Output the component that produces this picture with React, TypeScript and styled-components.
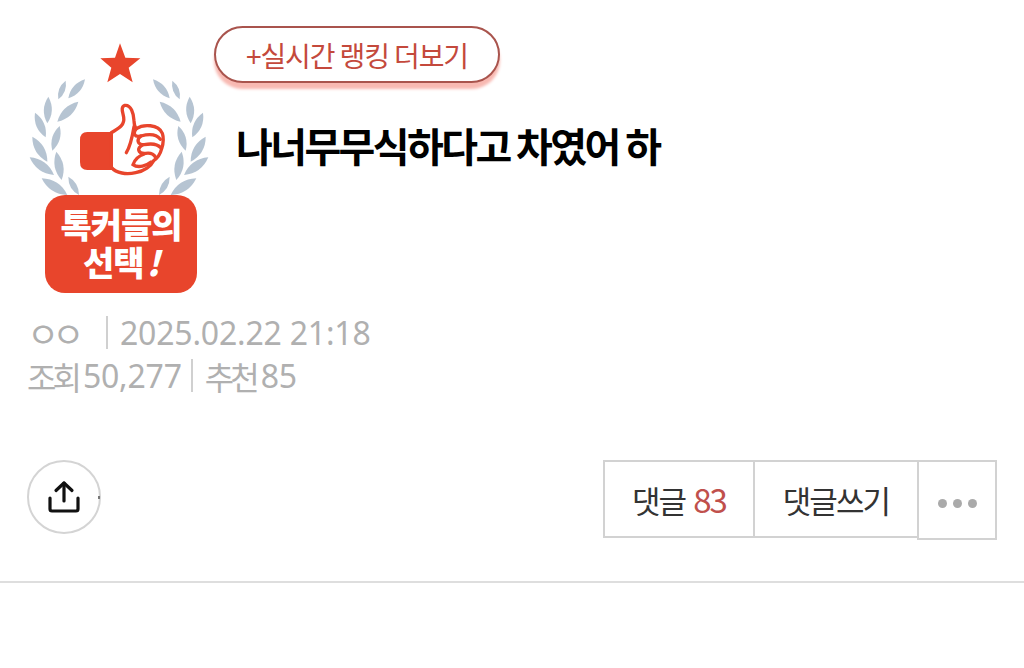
import React from 'react';
import styled, { createGlobalStyle } from 'styled-components';

const GlobalStyle = createGlobalStyle`
  html, body {
    margin: 0;
    padding: 0;
    background: #fff;
  }
  body {
    font-family: "Noto Sans CJK KR", "Noto Sans", sans-serif;
  }
`;

const Page = styled.div`
  width: 1024px;
  height: 668px;
  overflow: hidden;
  background: #fff;
`;

const Header = styled.div`
  display: flex;
  align-items: flex-start;
  padding: 26px 0 0 30px;
`;

const Badge = styled.div`
  width: 178px;
  flex: none;
  padding-top: 17px;
  svg {
    display: block;
    overflow: visible;
  }
`;

const BadgeLabel = styled.div`
  position: relative;
  width: 152px;
  height: 98px;
  margin: 0 0 0 15px;
  padding-top: 10px;
  box-sizing: border-box;
  border-radius: 20px;
  background: #e8452c;
  color: #fff;
  font-size: 34px;
  font-weight: 900;
  line-height: 38px;
  letter-spacing: -1px;
  text-align: center;
  em {
    font-style: italic;
    margin-left: 3px;
  }
`;

const HeadColumn = styled.div`
  flex: 1;
  padding-left: 6px;
`;

const RankingPill = styled.div`
  width: 286px;
  height: 57px;
  box-sizing: border-box;
  display: flex;
  align-items: center;
  justify-content: center;
  border: 2px solid #a9544d;
  border-radius: 29px;
  background: #fff;
  box-shadow: 0 6px 3px #f8b9b2;
  color: #c4493c;
  font-size: 28px;
  letter-spacing: -1.1px;
  white-space: nowrap;
`;

const Title = styled.h1`
  margin: 17px 0 3px 22px;
  color: #000;
  font-size: 40px;
  font-weight: 700;
  line-height: 90px;
  height: 90px;
  letter-spacing: -2.6px;
  white-space: nowrap;
`;

const Meta = styled.div`
  padding: 18px 0 0 27px;
  color: #b0b0b0;
  font-family: "Noto Sans", "Noto Sans CJK KR", sans-serif;
  font-size: 32px;
  font-weight: 400;
`;

const MetaRow = styled.div`
  display: flex;
  align-items: center;
  height: 43px;
  white-space: nowrap;
  letter-spacing: -0.2px;
`;

const Author = styled.span`
  width: 69px;
  font-size: 35px;
  letter-spacing: -7px;
  box-sizing: border-box;
`;

const Bar = styled.i<{ $left: number; $right: number }>`
  width: 2px;
  height: 33px;
  margin: 0 ${(p) => p.$right}px 0 ${(p) => p.$left}px;
  background: #d0d0d0;
  flex: none;
`;

const Label = styled.span`
  letter-spacing: -4px;
`;

const Count = styled.span`
  margin: 0 0 0 5px;
`;

const Actions = styled.div`
  display: flex;
  align-items: flex-start;
  justify-content: space-between;
  padding: 63px 27px 0;
`;

const ShareButton = styled.div`
  position: relative;
  width: 74px;
  height: 74px;
  box-sizing: border-box;
  display: flex;
  align-items: center;
  justify-content: center;
  border: 2px solid #d4d4d4;
  border-radius: 50%;
`;

const Speck = styled.i`
  position: absolute;
  right: -1px;
  top: 34px;
  width: 2px;
  height: 3px;
  background: #777;
`;

const ButtonGroup = styled.div`
  display: flex;
  align-items: flex-start;
`;

const ActionButton = styled.div<{ $width: number; $height?: number }>`
  width: ${(p) => p.$width}px;
  height: ${(p) => p.$height ?? 78}px;
  margin-left: -2px;
  box-sizing: border-box;
  display: flex;
  align-items: center;
  justify-content: center;
  gap: 8px;
  border: 2px solid #d2d2d2;
  color: #333;
  font-size: 31px;
  letter-spacing: -1.9px;
  white-space: nowrap;
`;

const CommentCount = styled.span`
  color: #c0504c;
  font-size: 33px;
`;

const Dots = styled.div`
  display: flex;
  gap: 6px;
  padding-top: 6px;
  i {
    width: 9px;
    height: 9px;
    border-radius: 50%;
    background: #aaa;
  }
`;

const Divider = styled.hr`
  margin: 41px 0 0;
  border: 0;
  height: 2px;
  background: #dedede;
`;

// coordinates are [tipX, tipY, baseX, baseY], the right side is mirrored around x=300
const LEAVES = [
  [198, 148, 148, 205],
  [140, 152, 118, 208],
  [178, 215, 115, 275],
  [88, 200, 85, 280],
  [48, 248, 80, 322],
  [122, 288, 100, 362],
  [40, 320, 85, 395],
  [112, 365, 128, 450],
  [32, 382, 105, 435],
  [148, 440, 180, 495],
  [68, 445, 145, 495],
];

function leafPath(tx: number, ty: number, bx: number, by: number) {
  const mx = (tx + bx) / 2;
  const my = (ty + by) / 2;
  const dx = by - ty;
  const dy = tx - bx;
  const k = 0.3;
  return `M${tx} ${ty}Q${mx + dx * k} ${my + dy * k} ${bx} ${by}Q${mx - dx * k} ${my - dy * k} ${tx} ${ty}Z`;
}

function BadgeArt() {
  return (
    <svg width="178" height="152" viewBox="33 39 534 456">
      <polygon
        fill="#e8452c"
        points="303,40 319,83 364,85 329,113 341,157 303,132 265,157 277,113 244,85 288,83"
      />
      {LEAVES.map(([tx, ty, bx, by]) => (
        <g key={`${tx}-${ty}`} fill="#b6c4d2">
          <path d={leafPath(tx, ty, bx, by)} />
          <path d={leafPath(600 - tx, ty, 600 - bx, by)} />
        </g>
      ))}
      <path d="M280 306H205Q183 306 183 330V396Q183 420 205 420H280Z" fill="#e8452c" />
      <path
        d="M277 308C296 296 318 288 314 262C311 244 304 232 318 226C336 224 344 250 345 272C346 282 345 290 352 296C372 282 418 282 430 310C436 328 432 344 428 356C424 372 416 384 404 392C396 408 376 424 350 428C322 434 292 430 277 412Z"
        fill="#fff"
        stroke="#e8452c"
        strokeWidth="10"
        strokeLinejoin="round"
      />
      <g fill="none" stroke="#e8452c" strokeWidth="10" strokeLinecap="round">
        <path d="M352 296C340 310 346 322 366 318C388 312 412 312 424 328" />
        <path d="M366 318C352 328 354 344 376 344C396 340 414 340 426 354" />
        <path d="M372 344C352 354 356 372 380 370C392 368 404 372 410 382" />
        <path d="M376 372C358 378 346 392 342 404C358 416 384 406 396 396" />
        <path d="M345 290C340 320 336 346 322 368" />
      </g>
    </svg>
  );
}

function ShareIcon() {
  return (
    <svg width="34" height="34" viewBox="0 0 34 34" fill="none" stroke="#111" strokeWidth="3.2" strokeLinecap="round" strokeLinejoin="round">
      <path d="M17 3V21" />
      <path d="M9 10.5L17 3L25 10.5" />
      <path d="M3 18V29Q3 31 5 31H29Q31 31 31 29V18" />
    </svg>
  );
}

export default function App() {
  return (
    <Page>
      <GlobalStyle />
      <Header>
        <Badge>
          <BadgeArt />
          <BadgeLabel>
            톡커들의
            <br />
            선택<em>!</em>
          </BadgeLabel>
        </Badge>
        <HeadColumn>
          <RankingPill>+실시간 랭킹 더보기</RankingPill>
          <Title>나너무무식하다고 차였어 하</Title>
        </HeadColumn>
      </Header>
      <Meta>
        <MetaRow>
          <Author>ㅇㅇ</Author>
          <Bar $left={10} $right={12} />
          2025.02.22 21:18
        </MetaRow>
        <MetaRow>
          <Label>조회</Label>
          <Count>50,277</Count>
          <Bar $left={9} $right={12} />
          <Label>추천</Label>
          <Count>85</Count>
        </MetaRow>
      </Meta>
      <Actions>
        <ShareButton>
          <ShareIcon />
          <Speck />
        </ShareButton>
        <ButtonGroup>
          <ActionButton $width={152}>
            <span>댓글</span>
            <CommentCount>83</CommentCount>
          </ActionButton>
          <ActionButton $width={166}>댓글쓰기</ActionButton>
          <ActionButton $width={80} $height={80}>
            <Dots>
              <i />
              <i />
              <i />
            </Dots>
          </ActionButton>
        </ButtonGroup>
      </Actions>
      <Divider />
    </Page>
  );
}
